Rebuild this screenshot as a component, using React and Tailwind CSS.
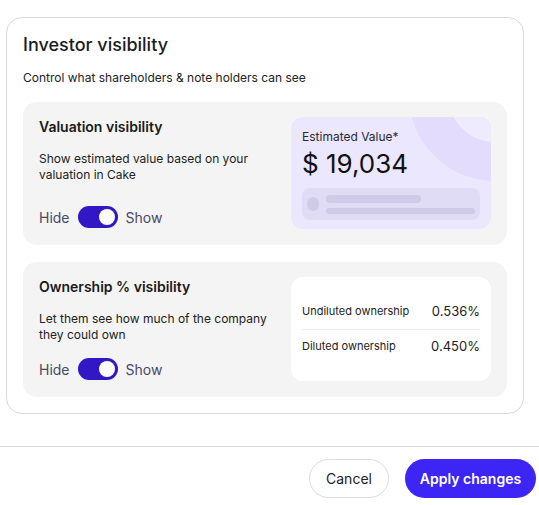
import React from "react";

function Toggle() {
  return (
    <div className="flex items-center gap-[8px] text-[14px] text-[#4a4768]">
      <span>Hide</span>
      <div className="flex h-[22px] w-[40px] items-center justify-end rounded-full bg-[#3217c4] pr-[3px]">
        <div className="h-[16px] w-[16px] rounded-full bg-white" />
      </div>
      <span>Show</span>
    </div>
  );
}

function ValuationCard() {
  return (
    <div className="relative h-[112px] w-[200px] shrink-0 overflow-hidden rounded-[12px] bg-[#ebe7fe]">
      {/* background circles */}
      <div className="absolute left-[118px] top-[-108px] h-[172px] w-[172px] rounded-full bg-[#e3dcfd]" />
      <div className="absolute left-[157px] top-[-69px] h-[94px] w-[94px] rounded-full bg-[#efebfe]" />
      <div className="relative flex flex-col px-[11px] pt-[12px]">
        <span className="text-[12px] leading-[16px] text-[#2a2a2e]">Estimated Value*</span>
        <span className="mt-[3px] text-[26px] leading-[32px] text-[#111]">$ 19,034</span>
        <div className="mt-[8px] flex h-[32px] items-center gap-[7px] rounded-[8px] bg-[#e0dcf6] px-[5px]">
          <div className="h-[14px] w-[14px] rounded-full bg-[#cfcbe6]" />
          <div className="flex flex-1 flex-col gap-[5px] pt-[1px]">
            <div className="h-[8px] w-[95px] rounded-full bg-[#cfcbe6]" />
            <div className="h-[6px] w-[149px] rounded-full bg-[#cfcbe6]" />
          </div>
        </div>
      </div>
    </div>
  );
}

function OwnershipCard() {
  return (
    <div className="flex h-[104px] w-[200px] shrink-0 flex-col justify-center rounded-[12px] bg-white px-[11px]">
      <div className="flex h-[20px] items-center justify-between">
        <span className="text-[11px] text-[#222]">Undiluted ownership</span>
        <span className="text-[13px] text-[#222]">0.536%</span>
      </div>
      <div className="my-[7px] h-px bg-[#ececec]" />
      <div className="flex h-[20px] items-center justify-between">
        <span className="text-[11px] text-[#222]">Diluted ownership</span>
        <span className="text-[13px] text-[#222]">0.450%</span>
      </div>
    </div>
  );
}

function Section({ title, lines, children }) {
  return (
    <div className="flex gap-[12px] rounded-[14px] bg-[#f4f4f4] pt-[15px] pb-[16px] pl-[16px] pr-[16px]">
      <div className="flex flex-1 flex-col justify-between">
        <div>
          <div className="text-[14px] leading-[20px] font-semibold text-[#1a1a1a]">{title}</div>
          <div className="mt-[14px] text-[12px] leading-[16px] text-[#222]">
            {lines.map((l) => (
              <div key={l}>{l}</div>
            ))}
          </div>
        </div>
        <div className="pb-[1px]">
          <Toggle />
        </div>
      </div>
      {children}
    </div>
  );
}

export default function App() {
  return (
    <div className="h-[505px] w-[539px] bg-white" style={{ fontFamily: "Inter, 'Noto Sans', sans-serif" }}>
      <div className="ml-[6px] w-[518px] pt-[17px]">
        <div className="rounded-[16px] border border-[#d9d9de] px-[16px] pt-[15px] pb-[16px]">
          <h1 className="text-[18px] leading-[24px] font-medium text-[#1c1c1e]">Investor visibility</h1>
          <p className="mt-[13px] text-[12px] leading-[16px] text-[#222]">
            Control what shareholders &amp; note holders can see
          </p>
          <div className="mt-[16px] flex flex-col gap-[17px]">
            <Section title="Valuation visibility" lines={["Show estimated value based on your", "valuation in Cake"]}>
              <ValuationCard />
            </Section>
            <Section title="Ownership % visibility" lines={["Let them see how much of the company", "they could own"]}>
              <OwnershipCard />
            </Section>
          </div>
        </div>
      </div>

      {/* footer */}
      <div className="mt-[32px] border-t border-[#d9d9de]">
        <div className="flex justify-end gap-[16px] pt-[12px] pr-[3px]">
          <button className="h-[39px] w-[80px] rounded-full border border-[#dcdce0] bg-white text-[14px] text-[#222]">
            Cancel
          </button>
          <button className="h-[39px] w-[131px] rounded-full bg-[#3d25f5] text-[14px] font-semibold text-white">
            Apply changes
          </button>
        </div>
      </div>
    </div>
  );
}
